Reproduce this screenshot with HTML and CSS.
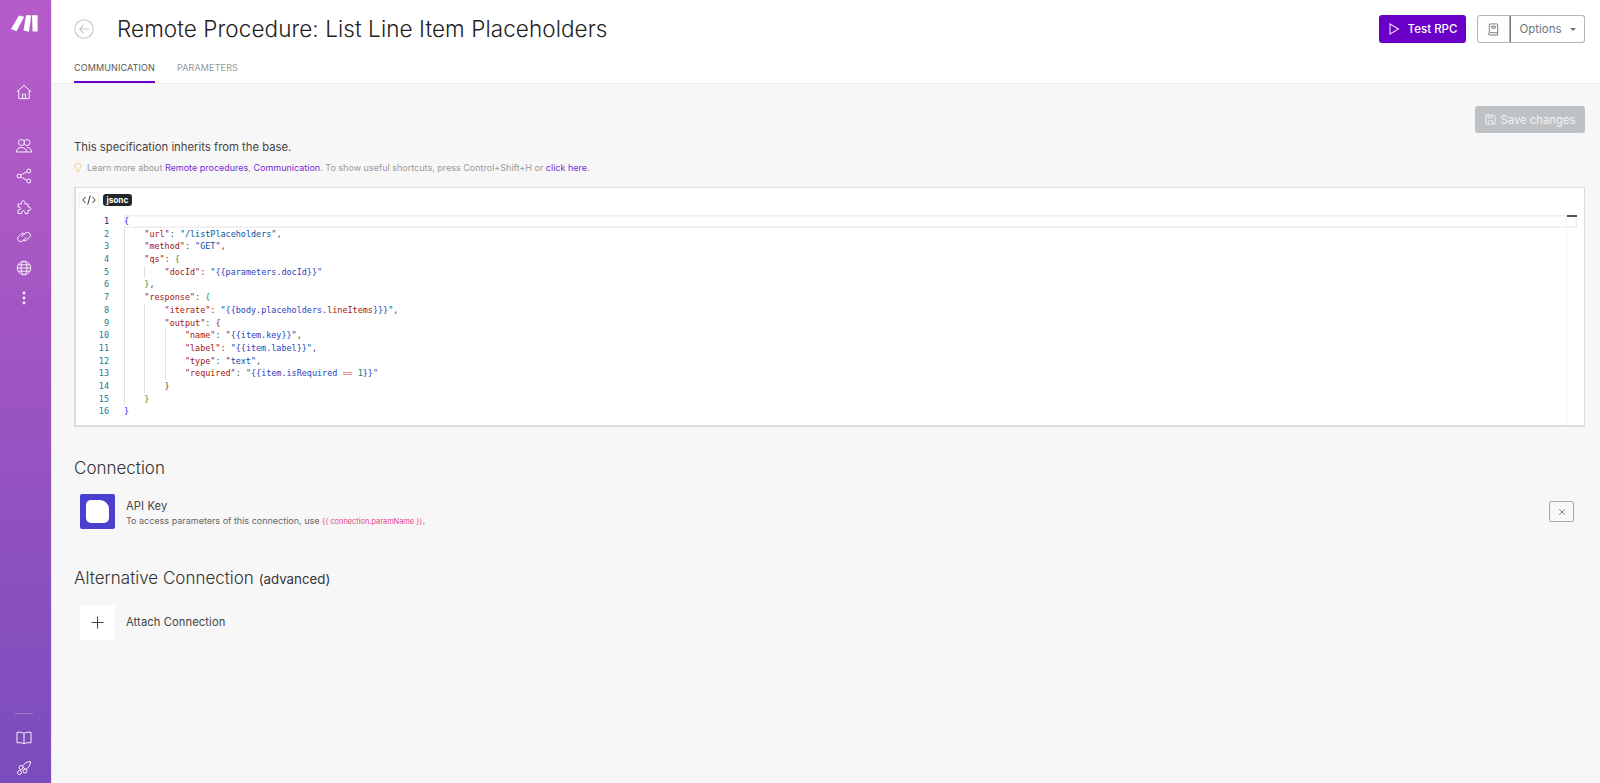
FILE: index.html
```html
<!DOCTYPE html>
<html lang="en">
<head>
<meta charset="utf-8">
<title>Remote Procedure: List Line Item Placeholders</title>
<link rel="stylesheet" href="styles.css">
</head>
<body>
<div class="app">
  <nav class="sidebar">
    <svg class="logo" viewBox="0 0 27 17"><path d="M0 14 8 .4l5.200 1.400L5.500 16.300zM15 .2h5.200L18 16.700l-5.500-1.200zM21 .2h5.600V16.500h-5z" fill="#fff"/></svg>
    <svg class="nav-icon home" viewBox="0 0 16 16"><path d="M1 7.600 8 1.400l7 6.200M2.800 6.400v8.200h10.400V6.400M6.500 14.600v-4.400h3v4.400"/></svg>
    <div class="nav-group">
      <svg class="nav-icon" viewBox="0 0 16 16"><circle cx="5.500" cy="4.500" r="3"/><circle cx="11" cy="4.500" r="3"/><path d="M.5 14c0-3 2-4.500 5-4.500s5 1.500 5 4.500zM11 9.500c2.700 0 4.500 1.500 4.500 4.500h-5"/></svg>
      <svg class="nav-icon" viewBox="0 0 16 16"><circle cx="3" cy="8" r="2"/><circle cx="12.800" cy="3" r="2"/><circle cx="12.800" cy="13" r="2"/><path d="m4.800 7 6.200-3.200M4.800 9l6.200 3.200"/></svg>
      <svg class="nav-icon" viewBox="0 0 16 16"><path d="M2 5h3.500V3.500a1.700 1.700 0 0 1 3.400 0V5h3.100v3h1a1.700 1.700 0 0 1 0 3.400h-1v3.100H9v-1a1.700 1.700 0 0 0-3.400 0v1H2v-3.500h1a1.500 1.500 0 0 0 0-3H2z"/></svg>
      <svg class="nav-icon" viewBox="0 0 16 16"><path d="M5.500 7.500 9.500 4a3 3 0 0 1 4.500 3.800L11 10.800a3 3 0 0 1-4.200.2"/><path d="M10.500 8.500 6.500 12A3 3 0 0 1 2 8.200L5 5.200a3 3 0 0 1 4.200-.2"/></svg>
      <svg class="nav-icon" viewBox="0 0 16 16"><circle cx="8" cy="8" r="6.800"/><ellipse cx="8" cy="8" rx="3" ry="6.800"/><path d="M1.200 8h13.600M2 4.800h12M2 11.200h12"/></svg>
      <svg class="nav-icon dots" viewBox="0 0 16 16"><circle cx="8" cy="3" r="1.400"/><circle cx="8" cy="8" r="1.400"/><circle cx="8" cy="13" r="1.400"/></svg>
    </div>
    <div class="nav-bottom">
      <div class="nav-rule"></div>
      <svg class="nav-icon" viewBox="0 0 16 16"><path d="M8 3.500C6.500 2.300 4 2 1 2.300v10.500c3-.3 5.500 0 7 1 1.500-1 4-1.300 7-1V2.300C12 2 9.500 2.300 8 3.500zM8 3.500v10.300"/></svg>
      <svg class="nav-icon" viewBox="0 0 16 16"><path d="M14.500 1.500c-4 .3-6.500 2-8 5l3 3c3-1.500 4.700-4 5-8z"/><circle cx="5" cy="7.500" r="2"/><circle cx="9" cy="11" r="2"/><circle cx="3.500" cy="12.500" r="2"/></svg>
    </div>
  </nav>

  <div class="main">
    <header class="header">
      <div class="title-row">
        <svg class="back" viewBox="0 0 20 20"><circle cx="10" cy="10" r="9.200"/><path d="M15 10H5.500M9.500 6l-4 4 4 4"/></svg>
        <h1 class="title">Remote Procedure: List Line Item Placeholders</h1>
        <div class="actions">
          <button class="btn-primary"><svg class="play" viewBox="0 0 12 12"><path d="M2 1v10l8.500-5z"/></svg>Test RPC</button>
          <div class="btn-group">
            <button class="btn-outline btn-book"><svg class="book" viewBox="0 0 14 14"><path d="M2.500 10.500V2a1 1 0 0 1 1-1h7a1 1 0 0 1 1 1v11h-8a1.300 1.300 0 0 1-1-2.500h9M5 3.500h4v2H5z"/></svg></button>
            <button class="btn-outline btn-options">Options<span class="caret"></span></button>
          </div>
        </div>
      </div>
      <div class="tabs">
        <a class="tab tab-active">COMMUNICATION</a>
        <a class="tab">PARAMETERS</a>
      </div>
    </header>

    <main class="content">
      <div class="save-row">
        <button class="btn-save"><svg class="save-icon" viewBox="0 0 12 12"><path d="M1 1h8l2 2v8H1zM3.500 1v3h4V1M3.500 11V7.500h5V11"/></svg>Save changes</button>
      </div>
      <p class="inherit">This specification inherits from the base.</p>
      <p class="hint"><svg class="bulb" viewBox="0 0 10 12"><path d="M3.400 8.500C3 7 1 6.200 1 4a4 4 0 0 1 8 0c0 2.200-2 3-2.400 4.500zM3.700 10.800h2.600"/></svg>Learn more about <a>Remote procedures</a>, <a>Communication</a>. To show useful shortcuts, press Control+Shift+H or <a>click here</a>.</p>

      <section class="editor">
        <div class="editor-bar">
          <span class="code-toggle"><svg viewBox="0 0 14 10"><path d="M3.500 2 .8 5l2.700 3M10.500 2l2.700 3-2.700 3M8.300.5 5.700 9.500"/></svg></span>
          <span class="lang">jsonc</span>
        </div>
        <div class="code">
          <div class="line current"><span class="num num-active">1</span><span class="src"><span class="b1">{</span></span></div>
          <div class="line"><span class="num">2</span><span class="src"><span class="ind"></span><span class="k">"url"</span>: <span class="s">"/listPlaceholders"</span>,</span></div>
          <div class="line"><span class="num">3</span><span class="src"><span class="ind"></span><span class="k">"method"</span>: <span class="s">"GET"</span>,</span></div>
          <div class="line"><span class="num">4</span><span class="src"><span class="ind"></span><span class="k">"qs"</span>: <span class="b2">{</span></span></div>
          <div class="line"><span class="num">5</span><span class="src"><span class="ind"></span><span class="ind"></span><span class="k">"docId"</span>: <span class="s">"</span><span class="t">{{parameters.docId}}</span><span class="s">"</span></span></div>
          <div class="line"><span class="num">6</span><span class="src"><span class="ind"></span><span class="b2">}</span>,</span></div>
          <div class="line"><span class="num">7</span><span class="src"><span class="ind"></span><span class="k">"response"</span>: <span class="b2">{</span></span></div>
          <div class="line"><span class="num">8</span><span class="src"><span class="ind"></span><span class="ind"></span><span class="k">"iterate"</span>: <span class="s">"</span><span class="t">{{body.placeholders.<span class="k">lineItems</span>}}}</span><span class="s">"</span>,</span></div>
          <div class="line"><span class="num">9</span><span class="src"><span class="ind"></span><span class="ind"></span><span class="k">"output"</span>: <span class="b3">{</span></span></div>
          <div class="line"><span class="num">10</span><span class="src"><span class="ind"></span><span class="ind"></span><span class="ind"></span><span class="k">"name"</span>: <span class="s">"</span><span class="t">{{item.key}}</span><span class="s">"</span>,</span></div>
          <div class="line"><span class="num">11</span><span class="src"><span class="ind"></span><span class="ind"></span><span class="ind"></span><span class="k">"label"</span>: <span class="s">"</span><span class="t">{{item.label}}</span><span class="s">"</span>,</span></div>
          <div class="line"><span class="num">12</span><span class="src"><span class="ind"></span><span class="ind"></span><span class="ind"></span><span class="k">"type"</span>: <span class="s">"text"</span>,</span></div>
          <div class="line"><span class="num">13</span><span class="src"><span class="ind"></span><span class="ind"></span><span class="ind"></span><span class="k">"required"</span>: <span class="s">"</span><span class="t">{{item.isRequired <span class="op">==</span> <span class="n">1</span>}}</span><span class="s">"</span></span></div>
          <div class="line"><span class="num">14</span><span class="src"><span class="ind"></span><span class="ind"></span><span class="b3">}</span></span></div>
          <div class="line"><span class="num">15</span><span class="src"><span class="ind"></span><span class="b2">}</span></span></div>
          <div class="line"><span class="num">16</span><span class="src"><span class="b1">}</span></span></div>
          <span class="ruler"></span>
          <span class="ruler-mark"></span>
        </div>
      </section>

      <h2 class="section-title">Connection</h2>
      <div class="conn">
        <div class="conn-icon"><span class="conn-shape"></span></div>
        <div class="conn-text">
          <div class="conn-name">API Key</div>
          <div class="conn-desc">To access parameters of this connection, use <span class="pink">{{ connection.paramName }}</span>.</div>
        </div>
        <button class="btn-x"><svg viewBox="0 0 10 10"><path d="m1.500 1.500 7 7M8.500 1.500l-7 7"/></svg></button>
      </div>

      <h2 class="section-title alt">Alternative Connection <small>(advanced)</small></h2>
      <div class="conn attach">
        <div class="plus-box"><svg viewBox="0 0 14 14"><path d="M7 .5v13M.5 7h13"/></svg></div>
        <div class="conn-name">Attach Connection</div>
      </div>
    </main>
  </div>
</div>
</body>
</html>
```
FILE: styles.css
```css
* { box-sizing: border-box; }
html, body { margin: 0; height: 100%; overflow: hidden; }
body { font-family: Inter, "Liberation Sans", sans-serif; color: #333; background: #f7f7f7; }
p, h1, h2 { margin: 0; }
button { font-family: inherit; }

.app { display: flex; height: 783px; }

.sidebar {
  width: 52px; flex: none; display: flex; flex-direction: column; align-items: center;
  background: linear-gradient(180deg, #b65cca 0%, #a657c4 35%, #7a4cbc 100%);
  padding: 15px 3px 0 0;
  border-right: 1px solid #e8e0f0;
}
.logo { width: 27px; height: 17px; display: block; flex: none; }
.nav-icon { width: 16px; height: 16px; display: block; fill: none; stroke: #fff; stroke-width: 1; opacity: .92; flex: none; }
.home { margin-top: 52px; }
.nav-group { display: flex; flex-direction: column; gap: 14.400px; margin-top: 38px; }
.dots { fill: #fff; stroke: none; }
.nav-bottom { margin-top: auto; display: flex; flex-direction: column; align-items: center; gap: 14px; padding-bottom: 7px; }
.nav-rule { width: 18px; height: 1px; background: rgba(255,255,255,.25); margin-bottom: 2px; }

.main { flex: 1; min-width: 0; display: flex; flex-direction: column; }

.header { background: #fff; border-bottom: 1px solid #ececec; height: 84px; padding: 0 15px 0 22px; display: flex; flex-direction: column; flex: none; }
.title-row { display: flex; align-items: center; height: 58px; flex: none; }
.back { width: 20px; height: 20px; fill: none; stroke: #c8c8c8; stroke-width: 1.100; margin-right: 23px; flex: none; }
.title { font-size: 22.500px; font-weight: 300; color: #222; letter-spacing: .07px; line-height: 1; padding-top: 1px; }
.actions { margin-left: auto; display: flex; align-items: center; gap: 11px; }
.btn-primary { height: 28px; width: 87px; border: 0; border-radius: 3px; background: #6a00c8; color: #fff; font-size: 11.500px; font-weight: 500; display: flex; align-items: center; justify-content: center; gap: 8px; padding: 0; }
.play { width: 12px; height: 12px; fill: none; stroke: #e8d8f8; stroke-width: 1.100; }
.btn-group { display: flex; }
.btn-outline { height: 28px; background: #fff; border: 1px solid #adb5bd; color: #6c757d; font-size: 11.500px; padding: 0; display: flex; align-items: center; justify-content: center; }
.btn-book { width: 33px; border-radius: 3px 0 0 3px; }
.book { width: 13px; height: 13px; fill: none; stroke: #6c757d; stroke-width: 1; }
.btn-options { width: 75px; border-radius: 0 3px 3px 0; border-left-color: #6c757d; gap: 8px; }
.caret { width: 0; height: 0; border: 3px solid transparent; border-top-color: #6c757d; border-bottom: 0; }

.tabs { display: flex; gap: 22px; flex: 1; align-items: stretch; }
.tab { font-size: 9px; color: #999; letter-spacing: .13px; display: flex; align-items: center; padding-bottom: 5px; border-bottom: 2px solid transparent; }
.tab-active { color: #555; border-bottom-color: #6a00c8; }

.content { flex: 1; padding: 22px 15px 0 22px; }
.save-row { display: flex; justify-content: flex-end; }
.btn-save { width: 110px; height: 27px; border: 0; border-radius: 3px; background: #bfc2c5; color: #f3f3f3; font-size: 11.300px; display: flex; align-items: center; justify-content: center; gap: 5px; padding: 0; }
.save-icon { width: 11px; height: 11px; fill: none; stroke: #f3f3f3; stroke-width: 1; }
.inherit { font-size: 11.300px; color: #444; margin-top: 5px; line-height: 18px; }
.hint { font-size: 9px; color: #999; margin-top: 6px; line-height: 12px; white-space: pre-wrap; }
.hint a { color: #7a2bd6; }
.bulb { width: 8px; height: 10px; fill: none; stroke: #f5c66a; stroke-width: 1; margin-right: 5px; vertical-align: -2px; }

.editor { margin-top: 13px; height: 240px; background: #fff; border: 2px solid #ddd; border-width: 1px 1px 2px 2px; }
.editor-bar { display: flex; align-items: center; height: 23px; padding: 1px 0 0 3px; gap: 4px; }
.code-toggle { width: 20px; height: 16px; background: #fff; border: 1px solid #f0f0f0; display: flex; align-items: center; justify-content: center; }
.code-toggle svg { width: 14px; height: 10px; fill: none; stroke: #333; stroke-width: 1; }
.lang { font-size: 8.200px; font-weight: 700; color: #fff; background: #23272b; border-radius: 3px; padding: 0 3.500px; line-height: 12px; }

.code { position: relative; margin-top: 4px; font-family: "DejaVu Sans Mono", monospace; font-size: 8.450px; line-height: 12.700px; color: #444; }
.line { display: flex; height: 12.700px; white-space: pre; }
.current .src { box-shadow: inset 0 0 0 1.500px #eee; margin-right: 7px; flex: 1; }
.num { width: 33px; text-align: right; color: #237893; flex: none; }
.num-active { color: #0b216f; }
.src { margin-left: 15px; }
.ind { display: inline-block; width: 20.300px; height: 12.700px; border-left: 1px solid #e0e0e0; vertical-align: top; }
.k { color: #a31515; }
.s { color: #0451a5; }
.t { color: #2a3fc0; }
.op { color: #e06c75; }
.n { color: #098658; }
.b1 { color: #0431fa; }
.b2 { color: #319331; }
.b3 { color: #7b3814; }
.ruler { position: absolute; top: 0; bottom: -7px; right: 17px; width: 1px; background: #f2f2f2; }
.ruler-mark { position: absolute; top: 0; right: 7px; width: 10px; height: 2px; background: #555; }

.section-title { font-size: 17px; font-weight: 300; color: #333; margin-top: 31px; line-height: 20px; }
.section-title small { font-size: 13.300px; font-weight: 400; }
.alt { margin-top: 39px; }
.conn { display: flex; align-items: center; margin: 16px 11px 0 6px; height: 35px; }
.conn-icon { width: 35px; height: 35px; background: #4a3fcf; border-radius: 2px; display: flex; align-items: center; justify-content: center; flex: none; }
.conn-shape { width: 23px; height: 23px; background: #fff; border-radius: 5px; border-top-right-radius: 9px; }
.conn-text { margin-left: 11px; padding-top: 3px; }
.conn-name { font-size: 11.200px; color: #444; line-height: 15px; letter-spacing: .1px; }
.conn-desc { font-size: 9px; color: #666; line-height: 12px; margin-top: 1px; }
.pink { color: #e83e8c; font-size: 7.400px; }
.btn-x { margin-left: auto; width: 25px; height: 21px; background: transparent; border: 1px solid #aaa; border-radius: 2px; padding: 0; display: flex; align-items: center; justify-content: center; }
.btn-x svg { width: 8px; height: 8px; fill: none; stroke: #777; stroke-width: 1.100; }
.attach { margin-top: 16px; }
.plus-box { width: 35px; height: 35px; background: #fff; border-radius: 2px; display: flex; align-items: center; justify-content: center; margin-right: 11px; }
.plus-box svg { width: 13px; height: 13px; fill: none; stroke: #444; stroke-width: 1.100; }
```
